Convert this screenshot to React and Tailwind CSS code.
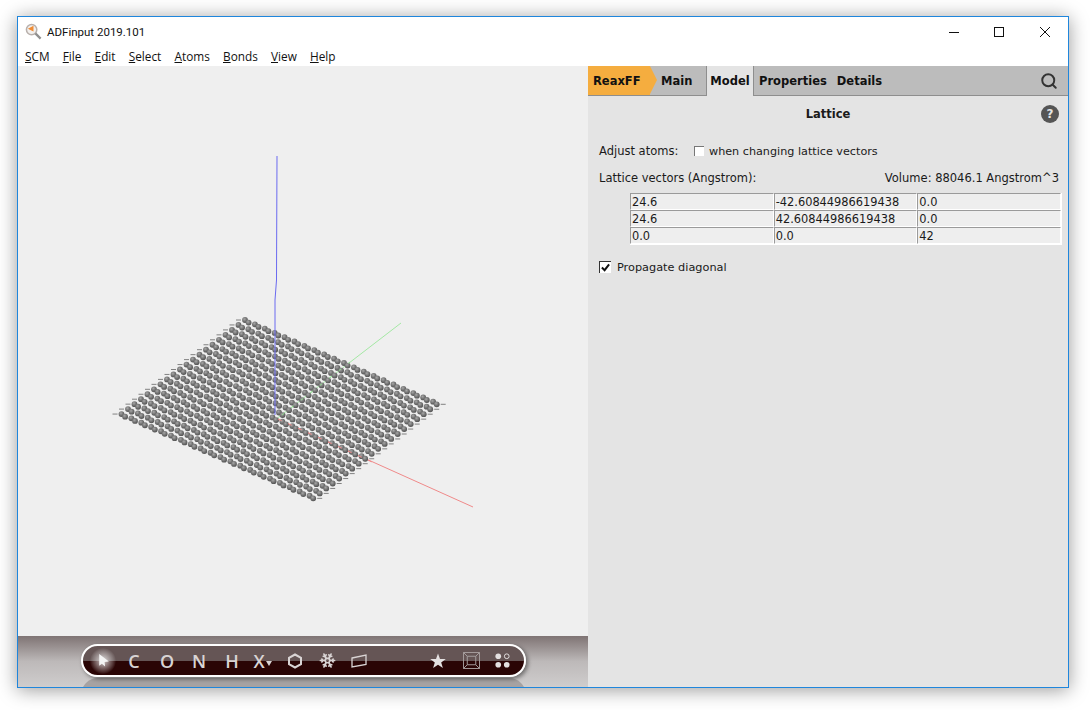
import { Search, Snowflake } from 'lucide-react';

const MENU = ['SCM', 'File', 'Edit', 'Select', 'Atoms', 'Bonds', 'View', 'Help'];
const ROWS = [
  ['24.6', '-42.60844986619438', '0.0'],
  ['24.6', '42.60844986619438', '0.0'],
  ['0.0', '0.0', '42'],
];

// graphene sheet, 20x20 cells projected onto the screen
const CELLS = 20;
const ORIGIN = [245, 320];
const U = [-6.5, 4.95];
const V = [9.9, 4.3];
const BASIS = [3.6, 2.6];

function buildAtoms() {
  const atoms = [];
  for (let i = 0; i < CELLS; i++) {
    for (let j = 0; j < CELLS; j++) {
      const x = ORIGIN[0] + i * U[0] + j * V[0];
      const y = ORIGIN[1] + i * U[1] + j * V[1];
      atoms.push({ x, y, edge: j === 0 ? -1 : 0 });
      atoms.push({ x: x + BASIS[0], y: y + BASIS[1], edge: j === CELLS - 1 ? 1 : 0 });
    }
  }
  return atoms.sort((a, b) => a.y - b.y);
}
const ATOMS = buildAtoms();

function Viewer() {
  return (
    <svg viewBox="18 66 570 570" className="block w-[570px] h-[570px]">
      <defs>
        <radialGradient id="atom" cx="0.4" cy="0.35" r="0.75">
          <stop offset="0" stopColor="#a6a6a6" />
          <stop offset="0.55" stopColor="#6e6e6e" />
          <stop offset="1" stopColor="#484848" />
        </radialGradient>
      </defs>
      <line x1="275" y1="420" x2="401" y2="323" stroke="#a4e8a4" strokeWidth="1" />
      <line x1="275" y1="418" x2="473" y2="507" stroke="#f08a8a" strokeWidth="1" />
      {ATOMS.map((a, i) => (
        <g key={i}>
          {a.edge !== 0 && (
            <line x1={a.x + a.edge * 4} y1={a.y} x2={a.x + a.edge * 9} y2={a.y} stroke="#666666" strokeWidth="0.8" />
          )}
          <circle cx={a.x} cy={a.y} r="2.9" fill="url(#atom)" />
        </g>
      ))}
      {/* axis fragments that show through the sheet */}
      <line x1="278" y1="419" x2="372" y2="462" stroke="#f08a8a" strokeWidth="1" strokeDasharray="4 7" />
      <line x1="282" y1="415" x2="350" y2="362" stroke="#8fe08f" strokeWidth="1" strokeDasharray="3 9" />
      <path d="M277 156 L276.5 280 L275 300 L275 415" fill="none" stroke="#6a6af0" strokeWidth="1" />
    </svg>
  );
}

function Tool({ children, className = '' }) {
  return <span className={`flex items-center justify-center text-[#d9d4d4] ${className}`}>{children}</span>;
}

function Toolbar() {
  const letter = "w-[32px] text-[18px] font-['Open_Sans',sans-serif] font-semibold leading-none";
  return (
    <div className="h-[51px] pt-[8px] pl-[63px] bg-gradient-to-b from-[#7f7474] via-[#bdb9b9] to-[#cfcdcd] overflow-hidden">
      <div className="relative w-[445px] h-[33px] rounded-[17px] border-2 border-white bg-[linear-gradient(to_bottom,#655555_0%,#655555_50%,#2a0505_50%,#2a0505_100%)] shadow-[2px_2px_4px_rgba(0,0,0,0.45)] flex items-center pl-[8px]">
        <Tool className="w-[26px] h-[26px] -ml-[1px] rounded-full bg-[radial-gradient(circle,rgba(255,255,255,0.8)_0%,rgba(255,255,255,0.2)_55%,transparent_72%)]">
          <svg viewBox="0 0 14 14" className="w-[15px] h-[15px]">
            <path d="M3 1 L12 8 L8 8.5 L8.5 12.5 L5.5 10 L3 12 Z" fill="#f4f4f4" />
          </svg>
        </Tool>
        <Tool className={`${letter} ml-[2px]`}>C</Tool>
        <Tool className={`${letter} ml-[1px]`}>O</Tool>
        <Tool className={letter}>N</Tool>
        <Tool className={`${letter} ml-[1px]`}>H</Tool>
        <Tool className={`${letter} relative -ml-[5px]`}>
          X
          <svg viewBox="0 0 6 5" className="absolute left-[23px] top-[9px] w-[6px] h-[5px]">
            <path d="M0 0 H6 L3 5 Z" fill="#d9d4d4" />
          </svg>
        </Tool>
        <Tool className="w-[32px] ml-[4px]">
          <svg viewBox="0 0 16 16" className="w-[16px] h-[16px]">
            <path d="M8 1.5 L14 4.8 V11.2 L8 14.5 L2 11.2 V4.8 Z" fill="none" stroke="#d9d4d4" strokeWidth="2" />
          </svg>
        </Tool>
        <Tool className="w-[32px]">
          <Snowflake size={17} strokeWidth={2.4} />
        </Tool>
        <Tool className="w-[32px]">
          <svg viewBox="0 0 16 14" className="w-[16px] h-[14px]">
            <path d="M1 4 L15 1 V10.5 L1 13 Z" fill="none" stroke="#d9d4d4" strokeWidth="1.3" />
          </svg>
        </Tool>
        <Tool className="w-[18px] ml-[54px] mr-[8px]">
          <svg viewBox="0 0 16 16" className="w-[16px] h-[16px]">
            <path d="M8 0.5 L10 6 H15.8 L11.2 9.4 L12.9 15 L8 11.7 L3.1 15 L4.8 9.4 L0.2 6 H6 Z" fill="#e4e0e0" />
          </svg>
        </Tool>
        <Tool className="w-[18px] ml-[7px]">
          <svg viewBox="0 0 18 18" className="w-[17px] h-[17px]">
            <path d="M0.5 0.5 H17.5 V17.5 H0.5 Z M4.5 4.5 H13.5 V13.5 H4.5 Z M0.5 0.5 L4.5 4.5 M17.5 0.5 L13.5 4.5 M0.5 17.5 L4.5 13.5 M17.5 17.5 L13.5 13.5" fill="none" stroke="#a9a2a2" strokeWidth="1" />
          </svg>
        </Tool>
        <Tool className="w-[18px] ml-[13px]">
          <svg viewBox="0 0 18 18" className="w-[17px] h-[17px]">
            <circle cx="4.5" cy="4.5" r="3" fill="#e4e0e0" />
            <circle cx="13.5" cy="4.5" r="2.5" fill="none" stroke="#e4e0e0" strokeWidth="1" />
            <circle cx="4.5" cy="13.5" r="3" fill="#e4e0e0" />
            <circle cx="13.5" cy="13.5" r="3" fill="#e4e0e0" />
          </svg>
        </Tool>
      </div>
      <div className="w-[445px] h-[20px] rounded-t-[17px] bg-[#a6a2a2] mt-px" />
    </div>
  );
}

function Tabs() {
  return (
    <div className="h-[30px] bg-[#bcbcbc] flex items-stretch text-[11.5px] font-bold text-[#111] border-b border-[#8e8e8e]">
      <div className="relative w-[62px] bg-[#f5ad3f] flex items-center pl-[5px] pt-[2px]">
        ReaxFF
        <span className="absolute left-full top-0 border-y-[14.5px] border-y-transparent border-l-[7px] border-l-[#f5ad3f]" />
      </div>
      <div className="w-[56px] flex items-center pl-[11px] pt-[2px]">Main</div>
      <div className="w-[48px] -mb-px bg-[#e4e4e4] border-x border-[#8e8e8e] flex items-center justify-center pt-[1px]">Model</div>
      <div className="flex items-center pl-[5px] pt-[2px]">Properties</div>
      <div className="flex items-center pl-[10px] pt-[2px]">Details</div>
      <div className="flex-1 flex items-center justify-end pr-[10px]">
        <Search size={18} strokeWidth={2.6} className="text-[#333]" />
      </div>
    </div>
  );
}

function Panel() {
  return (
    <div className="w-[480px] bg-[#e4e4e4] flex flex-col text-[11.5px] text-[#1a1a1a]">
      <Tabs />
      <div className="relative h-[35px] flex items-center justify-center font-bold pt-[2px]">
        Lattice
        <span className="absolute right-[9px] top-[9px] w-[18px] h-[18px] rounded-full bg-[#555] text-[#e4e4e4] text-[12px] font-bold flex items-center justify-center">?</span>
      </div>
      <div className="flex items-center pl-[11px] mt-[13px] h-[14px] pt-[2px]">
        <span className="w-[95px]">Adjust atoms:</span>
        <span className="w-[10px] h-[10px] -mt-[2px] bg-white border-t border-l border-[#777] mr-[5px]" />
        <span className="text-[11.2px]">when changing lattice vectors</span>
      </div>
      <div className="flex items-center justify-between pl-[11px] pr-[9px] mt-[13px] h-[14px] pt-[2px]">
        <span>Lattice vectors (Angstrom):</span>
        <span>Volume: 88046.1 Angstrom^3</span>
      </div>
      <div className="ml-[42px] mr-[6px] mt-[8px] grid grid-cols-3 border-r border-b border-white text-[11.4px]">
        {ROWS.flat().map((v, i) => (
          <div key={i} className="h-[17px] bg-[#eeeeee] border-t border-l border-[#9a9a9a] border-r border-r-white border-b border-b-white pl-px leading-[17px]">
            {v}
          </div>
        ))}
      </div>
      <div className="flex items-center pl-[11px] mt-[15px] h-[14px] pt-[2px] text-[11.3px]">
        <span className="w-[12px] h-[12px] -mt-[3px] bg-white border-t border-l border-[#333] mr-[6px] flex items-center justify-center">
          <svg viewBox="0 0 10 10" className="w-[9px] h-[9px]">
            <path d="M1 5 L4 8 L9 1.5" fill="none" stroke="#111" strokeWidth="2.2" />
          </svg>
        </span>
        <span>Propagate diagonal</span>
      </div>
    </div>
  );
}

export default function App() {
  return (
    <div className="w-[1090px] h-[710px] bg-white pt-[16px] pl-[17px] font-['DejaVu_Sans',sans-serif] overflow-hidden">
      <div className="w-[1052px] h-[672px] bg-white border border-[#1f86dc] shadow-[0_2px_18px_rgba(0,0,0,0.4)] flex flex-col">
        <div className="h-[28px] pt-px flex items-center pl-[7px] font-['Roboto',sans-serif] text-[11.5px] text-[#111]">
          <svg viewBox="0 0 18 18" className="w-[17px] h-[17px] mr-[5px]">
            <circle cx="7" cy="7" r="5.5" fill="#f3f0ee" stroke="#b8b0ac" strokeWidth="1.6" />
            <path d="M3 6 L9 3 L9 9 Z" fill="#ef8c35" />
            <path d="M11 11 L16.5 16.5" stroke="#8f8f8f" strokeWidth="2.4" />
          </svg>
          <span className="pt-[2px]">ADFinput 2019.101</span>
          <div className="ml-auto flex items-center">
            <span className="w-[46px] flex justify-center pl-px">
              <svg viewBox="0 0 10 10" className="w-[10px] h-[10px]"><path d="M0 5.5 H10" stroke="#111" strokeWidth="1" /></svg>
            </span>
            <span className="w-[46px] flex justify-center">
              <svg viewBox="0 0 10 10" className="w-[10px] h-[10px]"><rect x="0.5" y="0.5" width="9" height="9" fill="none" stroke="#111" strokeWidth="1" /></svg>
            </span>
            <span className="w-[46px] flex justify-center">
              <svg viewBox="0 0 10 10" className="w-[10px] h-[10px]"><path d="M0 0 L10 10 M10 0 L0 10" stroke="#111" strokeWidth="1" /></svg>
            </span>
          </div>
        </div>
        <div className="h-[21px] pt-[2px] flex items-center gap-[13.2px] pl-[7px] font-['Open_Sans',sans-serif] text-[11.8px] text-[#111]">
          {MENU.map((m) => (
            <span key={m}>
              <span className="underline">{m[0]}</span>
              {m.slice(1)}
            </span>
          ))}
        </div>
        <div className="flex-1 flex min-h-0">
          <div className="w-[570px] bg-[#efefef] flex flex-col">
            <Viewer />
            <Toolbar />
          </div>
          <Panel />
        </div>
      </div>
    </div>
  );
}
